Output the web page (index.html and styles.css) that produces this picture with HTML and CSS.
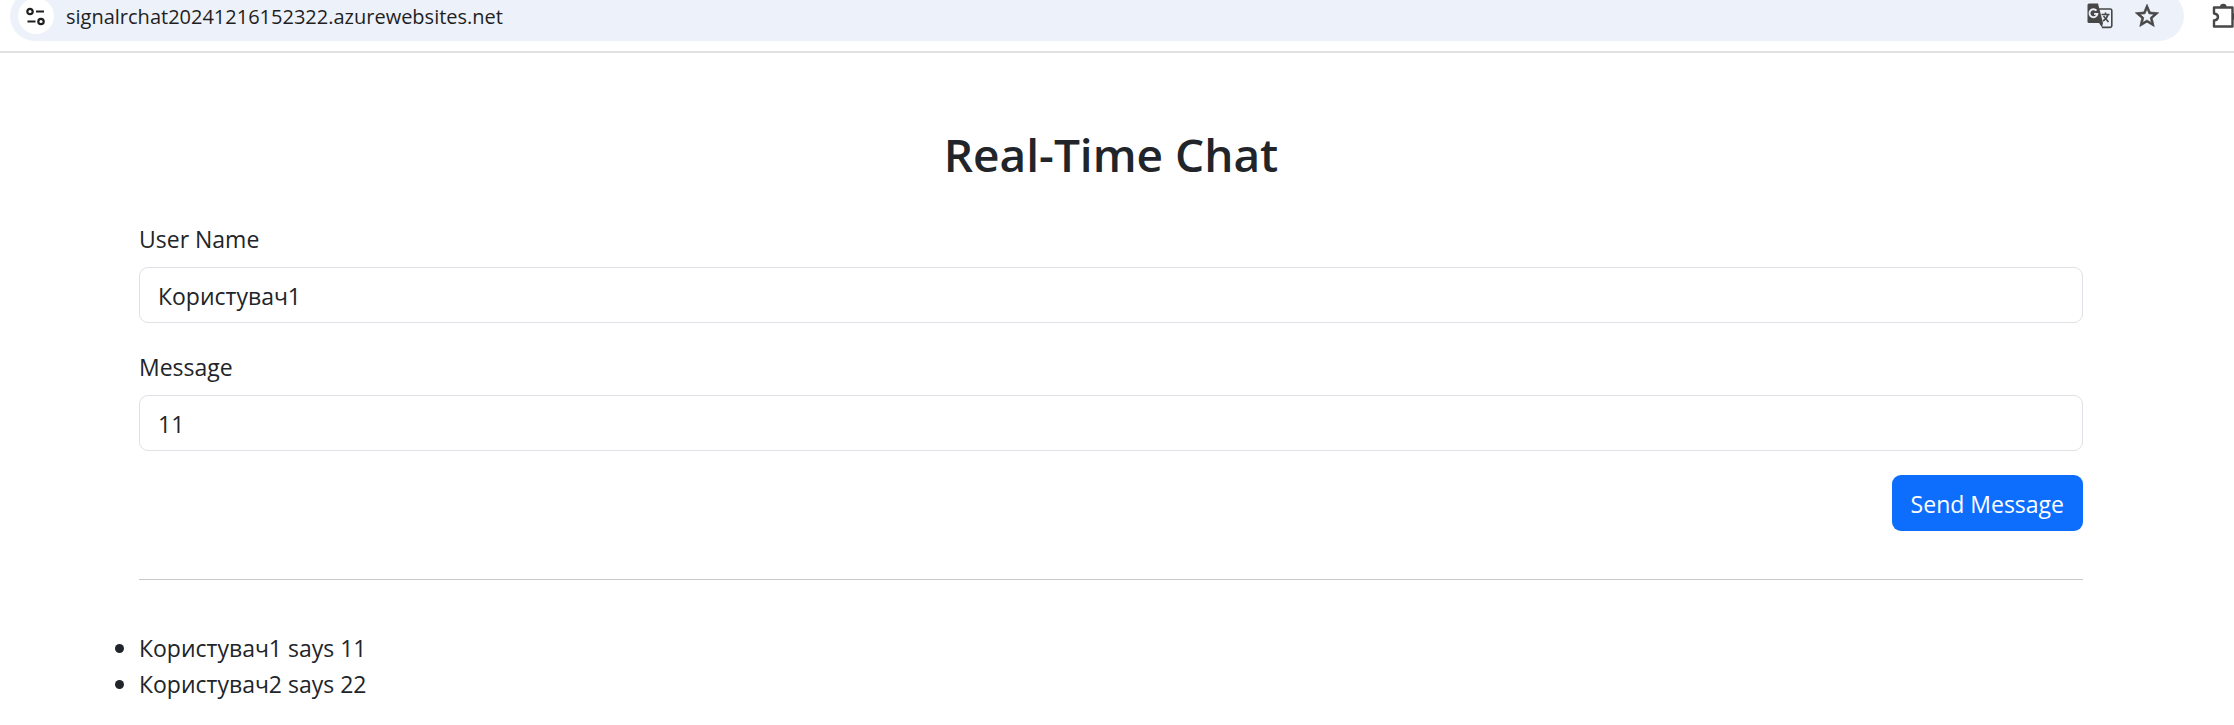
FILE: index.html
```html
<!DOCTYPE html>
<html lang="uk">
<head>
<meta charset="utf-8">
<title>Real-Time Chat</title>
<link rel="stylesheet" href="styles.css">
</head>
<body>
<header class="toolbar">
  <div class="omnibox">
    <button class="site-info" type="button" aria-label="Site information">
      <svg width="20" height="20" viewBox="0 0 20 20" fill="none" stroke="#1f1f1f" stroke-width="2.200">
        <circle cx="4" cy="5.500" r="2.700"/><path d="M10 5.500h8M1.500 15.500h8"/><circle cx="15" cy="15.500" r="2.700"/>
      </svg>
    </button>
    <span class="address">signalrchat20241216152322.azurewebsites.net</span>
    <button class="icon-button" type="button" aria-label="Translate">
      <svg width="26" height="26" viewBox="0 0 26 26">
        <path d="M11 6h12.200q1.600 0 1.600 1.600v15.200q0 1.600-1.600 1.600H15" fill="none" stroke="#474747" stroke-width="1.600"/>
        <path d="M2 0.500h9l5 19.500h-14q-1.500 0-1.500-1.500v-16.500q0-1.500 1.500-1.500z" fill="#474747"/>
        <path d="M12 20h4l-1 4.500z" fill="#474747"/>
        <path d="M9.500 7.600A4 4 0 1 0 10.400 10.900H7" fill="none" stroke="#edf1fa" stroke-width="1.900"/>
        <path d="M14.500 11.500h8M18.500 9.500v2M21 11.500q-1 4-5 6.500M16.500 13l5 6" fill="none" stroke="#474747" stroke-width="1.600"/>
      </svg>
    </button>
    <button class="icon-button" type="button" aria-label="Bookmark this page">
      <svg width="28" height="28" viewBox="0 0 24 24" fill="#474747" stroke="#474747" stroke-width=".6"><path d="M22 9.240l-7.190-.62L12 2 9.190 8.630 2 9.240l5.460 4.730L5.820 21 12 17.270 18.180 21l-1.630-7.030L22 9.240zM12 15.400l-3.760 2.270 1-4.280-3.320-2.880 4.380-.38L12 6.100l1.710 4.040 4.380.38-3.320 2.880 1 4.280L12 15.400z"/></svg>
    </button>
  </div>
  <button class="icon-button" type="button" aria-label="Extensions">
    <svg width="28" height="26" viewBox="0 0 28 26">
      <path d="M2 5.500h18.500v19H2v-6q4-.5 4-3.500t-4-3.500z" fill="none" stroke="#474747" stroke-width="2.400" stroke-linejoin="round"/>
      <path d="M8 5a3.300 3.300 0 0 1 6.600 0zM20.500 11a3.600 3.600 0 0 1 0 7z" fill="#474747"/>
    </svg>
  </button>
</header>
<main class="chat">
  <h1 class="title">Real-Time Chat</h1>
  <form class="chat-form">
    <div class="field">
      <label class="label" for="user">User Name</label>
      <input class="input" id="user" type="text" value="Користувач1">
    </div>
    <div class="field">
      <label class="label" for="message">Message</label>
      <input class="input" id="message" type="text" value="11">
    </div>
    <button class="send" type="button">Send Message</button>
  </form>
  <hr class="divider">
  <ul class="messages">
    <li>Користувач1 says 11</li>
    <li>Користувач2 says 22</li>
  </ul>
</main>
</body>
</html>
```
FILE: styles.css
```css
* { box-sizing: border-box; }
body {
  margin: 0;
  background: #fff;
  color: #212529;
  font-family: "Segoe UI", "Open Sans", "Noto Sans", sans-serif;
  font-size: 23px;
  line-height: 36px;
}
button, input { font: inherit; color: inherit; }
.toolbar {
  display: flex;
  align-items: flex-end;
  gap: 28px;
  height: 53px;
  padding: 0 0 10px 10px;
  border-bottom: 2px solid #e0e0e0;
  overflow: hidden;
}
.omnibox {
  flex: 1;
  display: flex;
  align-items: center;
  height: 50px;
  padding: 0 23px 0 8px;
  border-radius: 25px;
  background: #edf1fa;
}
.site-info {
  display: flex;
  align-items: center;
  justify-content: center;
  width: 36px;
  height: 36px;
  margin-right: 12px;
  padding: 0;
  border: 0;
  border-radius: 50%;
  background: #fff;
}
.address { flex: 1; padding-top: 2px; font-size: 20px; color: #1f1f1f; }
.icon-button { display: flex; padding: 0; border: 0; background: none; flex: none; }
.omnibox .icon-button + .icon-button { margin-left: 20px; }
.toolbar > .icon-button { margin: 0 -6px 13px 0; }
.chat { padding: 72px 151px 24px 139px; }
.title {
  margin: 0 0 36px;
  font-size: 46px;
  font-weight: 600;
  line-height: 58px;
  text-align: center;
}
.chat-form { display: flex; flex-direction: column; }
.field { display: flex; flex-direction: column; gap: 10px; margin-bottom: 24px; }
.label { padding-top: 2px; }
.input {
  width: 100%;
  height: 56px;
  padding: 2px 18px 0;
  border: 1px solid #dee2e6;
  border-radius: 9px;
  background: #fff;
}
.send {
  align-self: flex-end;
  height: 56px;
  padding: 2px 19px 0;
  border: 0;
  border-radius: 9px;
  background: #0d6efd;
  color: #fff;
}
.divider { margin: 48px 0; border: 0; border-top: 1px solid #c7c8c9; }
.messages { margin: 0 0 0 -24px; padding: 2px 0 0; list-style: none; }
.messages li { display: flex; align-items: center; gap: 15px; }
.messages li::before {
  content: "";
  width: 9px;
  height: 9px;
  border-radius: 50%;
  background: #212529;
}
```
